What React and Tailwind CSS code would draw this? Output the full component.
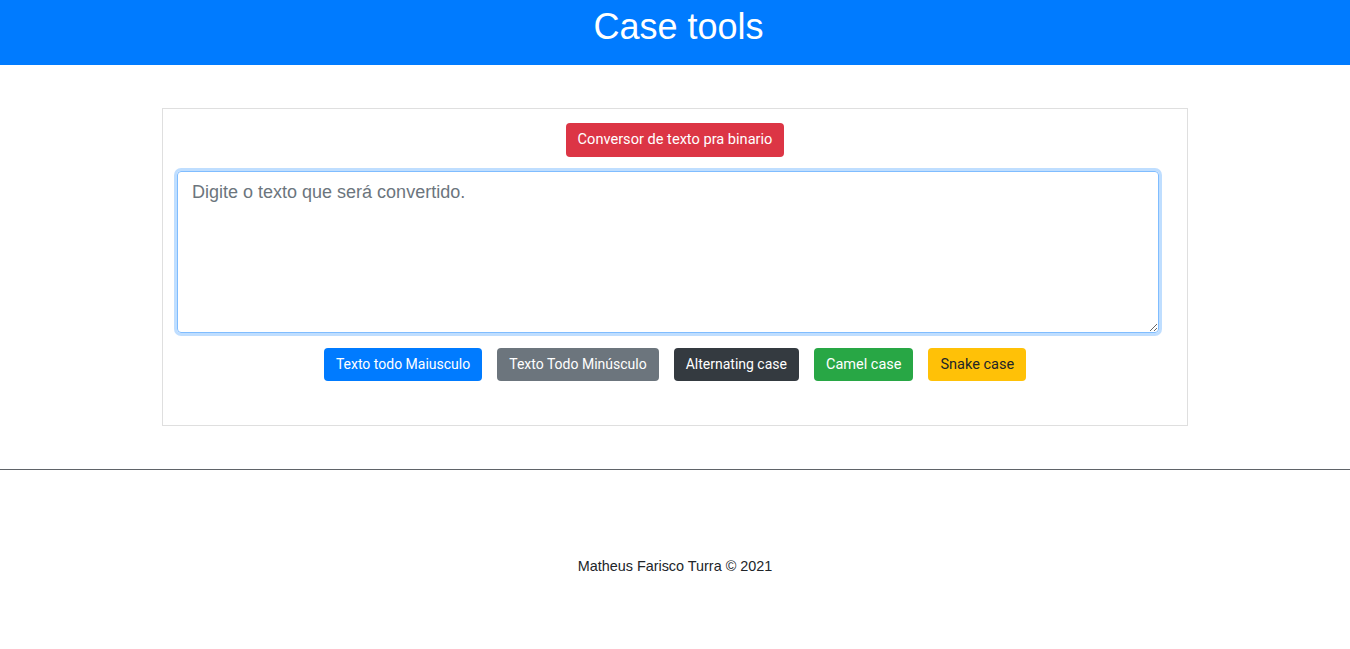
import React from 'react';

const buttons = [
  { label: 'Texto todo Maiusculo', cls: 'bg-[#007bff] text-white text-[14px]' },
  { label: 'Texto Todo Minúsculo', cls: 'bg-[#6c757d] text-white text-[14px]' },
  { label: 'Alternating case', cls: 'bg-[#343a40] text-white text-[14px]' },
  { label: 'Camel case', cls: 'bg-[#28a745] text-white text-[14.5px]' },
  { label: 'Snake case', cls: 'bg-[#ffc107] text-[#212529] text-[14.5px]' },
];

const App = () => {
  return (
    <div className="min-h-screen bg-white font-['Liberation_Sans',Arial,sans-serif] text-[#212529]">
      {/* Header */}
      <header className="h-[65px] bg-[#007bff] flex justify-center">
        <h1 className="ml-[7px] text-[36px] leading-[54px] text-white">Case tools</h1>
      </header>

      {/* Main card */}
      <div className="mt-[43px] mx-auto w-[1026px] h-[318px] border border-[#dfdfdf] pt-[14px]">
        <div className="flex justify-center">
          <button className="h-[34px] px-3 rounded bg-[#dc3545] text-white text-[14.6px] font-['Roboto',sans-serif]">
            Conversor de texto pra binario
          </button>
        </div>

        <textarea
          className="block mt-[14px] ml-[14px] w-[982px] h-[162px] rounded border border-[#80bdff] shadow-[0_0_0_3px_rgba(0,123,255,0.25)] outline-none px-[14px] py-[7px] text-[18px] leading-[27px] text-[#495057] placeholder:text-[#6c757d] font-['Liberation_Sans',Arial,sans-serif]"
          placeholder="Digite o texto que será convertido."
        />

        <div className="mt-[15px] flex justify-center gap-[15px]">
          {buttons.map((b) => (
            <button
              key={b.label}
              className={`h-[33px] px-3 rounded font-['Roboto',sans-serif] ${b.cls}`}
            >
              {b.label}
            </button>
          ))}
        </div>
      </div>

      <hr className="mt-[43px] border-0 h-px bg-[#5f6368]" />

      {/* Footer */}
      <footer className="pt-[86px] text-center text-[14.4px] leading-5 text-[#212529]">
        Matheus Farisco Turra © 2021
      </footer>
    </div>
  );
};

export default App;
